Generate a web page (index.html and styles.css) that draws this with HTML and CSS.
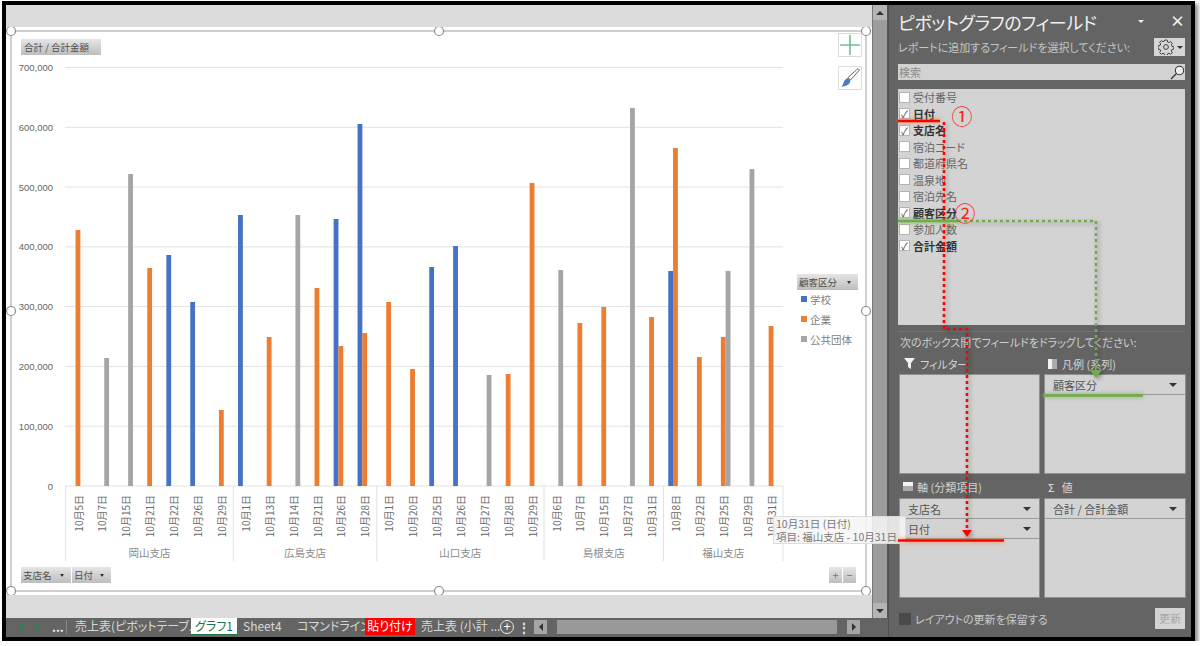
FILE: index.html
```html
<!DOCTYPE html>
<html lang="ja">
<head>
    <meta charset="UTF-8">
    <meta name="viewport" content="width=device-width, initial-scale=1.0">
    <title>ピボットグラフのフィールド</title>
    <link rel="stylesheet" href="styles.css">
</head>
<body>
<div class="frame">
    <div class="left">
        <div class="work">
            <div class="sheet-area">
                <div class="sheet">
                    <svg class="chart" width="866" height="568" viewBox="6 27 866 568">
                        <!-- gridlines -->
                        <g class="grid">
                            <line x1="65" y1="67.5" x2="783" y2="67.5"/>
                            <line x1="65" y1="127.3" x2="783" y2="127.3"/>
                            <line x1="65" y1="187.1" x2="783" y2="187.1"/>
                            <line x1="65" y1="246.9" x2="783" y2="246.9"/>
                            <line x1="65" y1="306.6" x2="783" y2="306.6"/>
                            <line x1="65" y1="366.4" x2="783" y2="366.4"/>
                            <line x1="65" y1="426.2" x2="783" y2="426.2"/>
                            <line x1="65" y1="486" x2="783" y2="486"/>
                            <line x1="65.7" y1="486" x2="65.7" y2="561"/>
                            <line x1="233.3" y1="486" x2="233.3" y2="561"/>
                            <line x1="376.7" y1="486" x2="376.7" y2="561"/>
                            <line x1="544" y1="486" x2="544" y2="561"/>
                            <line x1="663.5" y1="486" x2="663.5" y2="561"/>
                            <line x1="783" y1="486" x2="783" y2="561"/>
                        </g>
                        <g class="val">
                            <text x="53" y="67.5">700,000</text>
                            <text x="53" y="127.3">600,000</text>
                            <text x="53" y="187.1">500,000</text>
                            <text x="53" y="246.9">400,000</text>
                            <text x="53" y="306.6">300,000</text>
                            <text x="53" y="366.4">200,000</text>
                            <text x="53" y="426.2">100,000</text>
                            <text x="53" y="486">0</text>
                        </g>
                        <!-- bars -->
                        <g class="blue">
                            <rect x="166.35" y="255" width="4.8" height="231"/>
                            <rect x="190.25" y="302" width="4.8" height="184"/>
                            <rect x="238.05" y="215" width="4.8" height="271"/>
                            <rect x="333.65" y="219" width="4.8" height="267"/>
                            <rect x="357.55" y="124" width="4.8" height="362"/>
                            <rect x="429.25" y="267" width="4.8" height="219"/>
                            <rect x="453.15" y="246" width="4.8" height="240"/>
                            <rect x="668.25" y="271" width="4.8" height="215"/>
                        </g>
                        <g class="orange">
                            <rect x="75.55" y="230" width="4.8" height="256"/>
                            <rect x="147.25" y="268" width="4.8" height="218"/>
                            <rect x="218.95" y="410" width="4.8" height="76"/>
                            <rect x="266.75" y="337" width="4.8" height="149"/>
                            <rect x="314.55" y="288" width="4.8" height="198"/>
                            <rect x="338.45" y="346" width="4.8" height="140"/>
                            <rect x="362.35" y="333" width="4.8" height="153"/>
                            <rect x="386.25" y="302" width="4.8" height="184"/>
                            <rect x="410.15" y="369" width="4.8" height="117"/>
                            <rect x="505.75" y="374" width="4.8" height="112"/>
                            <rect x="529.65" y="183" width="4.8" height="303"/>
                            <rect x="577.45" y="323" width="4.8" height="163"/>
                            <rect x="601.35" y="307" width="4.8" height="179"/>
                            <rect x="649.15" y="317" width="4.8" height="169"/>
                            <rect x="673.05" y="148" width="4.8" height="338"/>
                            <rect x="696.95" y="357" width="4.8" height="129"/>
                            <rect x="720.85" y="337" width="4.8" height="149"/>
                            <rect x="768.65" y="326" width="4.8" height="160"/>
                        </g>
                        <g class="gray">
                            <rect x="104.25" y="358" width="4.8" height="128"/>
                            <rect x="128.15" y="174" width="4.8" height="312"/>
                            <rect x="295.45" y="215" width="4.8" height="271"/>
                            <rect x="486.65" y="375" width="4.8" height="111"/>
                            <rect x="558.35" y="270" width="4.8" height="216"/>
                            <rect x="630.05" y="108" width="4.8" height="378"/>
                            <rect x="725.65" y="271" width="4.8" height="215"/>
                            <rect x="749.55" y="169" width="4.8" height="317"/>
                        </g>
                        <!-- category labels -->
                        <g class="cat">
                            <text transform="translate(78,495) rotate(-90)">10月5日</text>
                            <text transform="translate(101.9,495) rotate(-90)">10月7日</text>
                            <text transform="translate(125.8,495) rotate(-90)">10月15日</text>
                            <text transform="translate(149.7,495) rotate(-90)">10月21日</text>
                            <text transform="translate(173.6,495) rotate(-90)">10月22日</text>
                            <text transform="translate(197.5,495) rotate(-90)">10月26日</text>
                            <text transform="translate(221.4,495) rotate(-90)">10月29日</text>
                            <text transform="translate(245.3,495) rotate(-90)">10月1日</text>
                            <text transform="translate(269.2,495) rotate(-90)">10月13日</text>
                            <text transform="translate(293.1,495) rotate(-90)">10月14日</text>
                            <text transform="translate(317,495) rotate(-90)">10月21日</text>
                            <text transform="translate(340.9,495) rotate(-90)">10月26日</text>
                            <text transform="translate(364.8,495) rotate(-90)">10月28日</text>
                            <text transform="translate(388.7,495) rotate(-90)">10月1日</text>
                            <text transform="translate(412.6,495) rotate(-90)">10月20日</text>
                            <text transform="translate(436.5,495) rotate(-90)">10月25日</text>
                            <text transform="translate(460.4,495) rotate(-90)">10月26日</text>
                            <text transform="translate(484.3,495) rotate(-90)">10月27日</text>
                            <text transform="translate(508.2,495) rotate(-90)">10月28日</text>
                            <text transform="translate(532.1,495) rotate(-90)">10月29日</text>
                            <text transform="translate(556,495) rotate(-90)">10月6日</text>
                            <text transform="translate(579.9,495) rotate(-90)">10月7日</text>
                            <text transform="translate(603.8,495) rotate(-90)">10月15日</text>
                            <text transform="translate(627.7,495) rotate(-90)">10月27日</text>
                            <text transform="translate(651.6,495) rotate(-90)">10月31日</text>
                            <text transform="translate(675.5,495) rotate(-90)">10月8日</text>
                            <text transform="translate(699.4,495) rotate(-90)">10月22日</text>
                            <text transform="translate(723.3,495) rotate(-90)">10月25日</text>
                            <text transform="translate(747.2,495) rotate(-90)">10月29日</text>
                            <text transform="translate(771.1,495) rotate(-90)">10月31日</text>
                        </g>
                        <g class="branch">
                            <text x="149.5" y="552">岡山支店</text>
                            <text x="305" y="552">広島支店</text>
                            <text x="460.3" y="552">山口支店</text>
                            <text x="603.7" y="552">島根支店</text>
                            <text x="723.2" y="552">福山支店</text>
                        </g>
                        <!-- legend -->
                        <rect class="blue" x="801" y="296" width="6" height="6"/>
                        <rect class="orange" x="801" y="316" width="6" height="6"/>
                        <rect class="gray" x="801" y="336" width="6" height="6"/>
                        <g class="legend">
                            <text x="810" y="299">学校</text>
                            <text x="810" y="319">企業</text>
                            <text x="810" y="339">公共団体</text>
                        </g>
                        <!-- selection frame -->
                        <rect class="sel" x="11" y="31" width="855" height="560"/>
                        <g class="handle">
                            <circle cx="11" cy="31" r="4.5"/>
                            <circle cx="439" cy="31" r="4.5"/>
                            <circle cx="866" cy="31" r="4.5"/>
                            <circle cx="11" cy="311" r="4.5"/>
                            <circle cx="866" cy="311" r="4.5"/>
                            <circle cx="11" cy="591" r="4.5"/>
                            <circle cx="439" cy="591" r="4.5"/>
                            <circle cx="866" cy="591" r="4.5"/>
                        </g>
                    </svg>

                    <div class="pill pill-value">合計 / 合計金額</div>
                    <div class="pill pill-legend">顧客区分<span class="tri-small"></span></div>
                    <div class="axis-pills">
                        <div class="pill pill-branch">支店名<span class="tri-small"></span></div>
                        <div class="pill pill-date">日付<span class="tri-small"></span></div>
                    </div>
                    <div class="zoom-btns">
                        <div class="pill zoom-btn">+</div>
                        <div class="pill zoom-btn">−</div>
                    </div>
                    <div class="side-btn side-add">
                        <svg width="22" height="22" viewBox="0 0 22 22"><path d="M11 1v20M1 11h20" stroke="#6fbf95" stroke-width="1.6" fill="none"/></svg>
                    </div>
                    <div class="side-btn side-style">
                        <svg width="22" height="22" viewBox="0 0 22 22">
                            <path d="M19 1.5l1.5 1.5-9 10-2.5-2.5z" fill="#fff" stroke="#666" stroke-width="1"/>
                            <path d="M9 11l2.5 2.5c-.5 3.5-3.5 6-9 6 1.5-1 1.500-3 2.500-5 .8-1.800 2.500-3 4-3.500z" fill="#4a7cc4"/>
                        </svg>
                    </div>
                </div>
            </div>
            <div class="vscroll">
                <div class="vscroll-btn"><span class="tri-up"></span></div>
                <div class="vscroll-track"></div>
                <div class="vscroll-btn"><span class="tri-down"></span></div>
            </div>
        </div>
        <div class="tabs">
            <span class="tab-arrow tab-arrow-l"></span>
            <span class="tab-arrow tab-arrow-r"></span>
            <span class="tab-more">...</span>
            <span class="tab tab-first">売上表(ピボットテーブル)</span>
            <span class="tab tab-active">グラフ1</span>
            <span class="tab tab-sheet4">Sheet4</span>
            <span class="tab tab-cmd">コマンドライン</span>
            <span class="tab tab-red">貼り付け</span>
            <span class="tab tab-last">売上表 (小計 ...</span>
            <span class="tab-add">+</span>
            <span class="tab-dots">⋮</span>
            <div class="hscroll">
                <div class="hscroll-btn"><span class="tri-left"></span></div>
                <div class="hscroll-thumb"></div>
                <div class="hscroll-btn"><span class="tri-right"></span></div>
            </div>
        </div>
    </div>

    <div class="panel">
        <div class="panel-title">
            <span class="panel-name">ピボットグラフのフィールド</span>
            <span class="tri-title"></span>
            <span class="panel-close">×</span>
        </div>
        <div class="panel-sub">
            <span>レポートに追加するフィールドを選択してください:</span>
            <div class="gear-btn">
                <svg width="16" height="16" viewBox="0 0 16 16">
                    <path d="M6.800 1h2.400l.4 2 1.400.6 1.700-1.100 1.700 1.700-1.100 1.700.6 1.400 2 .4v2.400l-2 .4-.6 1.400 1.100 1.700-1.700 1.700-1.700-1.100-1.400.6-.4 2H6.800l-.4-2-1.400-.6-1.700 1.100-1.700-1.700 1.100-1.700-.6-1.400-2-.4V6.800l2-.4.6-1.400-1.100-1.700 1.700-1.700 1.700 1.100 1.400-.6z" fill="none" stroke="#444" stroke-width="1"/>
                    <circle cx="8" cy="8" r="2.400" fill="none" stroke="#444" stroke-width="1"/>
                </svg>
                <span class="tri-dark"></span>
            </div>
        </div>
        <div class="search">
            <span>検索</span>
            <svg width="15" height="15" viewBox="0 0 15 15">
                <circle cx="9.500" cy="5.500" r="4.200" fill="#eee" stroke="#333" stroke-width="1.100"/>
                <path d="M6.500 8.500L1 14" stroke="#333" stroke-width="1.300"/>
            </svg>
        </div>
        <div class="field-list">
            <ul>
                <li><span class="check"></span>受付番号</li>
                <li class="on"><span class="check">✓</span>日付</li>
                <li class="on"><span class="check">✓</span>支店名</li>
                <li><span class="check"></span>宿泊コード</li>
                <li><span class="check"></span>都道府県名</li>
                <li><span class="check"></span>温泉地</li>
                <li><span class="check"></span>宿泊先名</li>
                <li class="on"><span class="check">✓</span>顧客区分</li>
                <li><span class="check"></span>参加人数</li>
                <li class="on"><span class="check">✓</span>合計金額</li>
            </ul>
        </div>
        <div class="divider"></div>
        <div class="hint">次のボックス間でフィールドをドラッグしてください:</div>
        <div class="areas">
            <div class="area-label">
                <svg width="13" height="11" viewBox="0 0 13 11"><path d="M1 0h11L8 5v6L5 9V5z" fill="#f2f2f2"/></svg>
                フィルター
            </div>
            <div class="area-label">
                <svg width="10" height="10" viewBox="0 0 10 10"><rect width="4" height="10" fill="#f2f2f2"/><rect x="4" width="5" height="10" fill="#aaa"/></svg>
                凡例 (系列)
            </div>
            <div class="area-box"></div>
            <div class="area-box">
                <div class="area-item">顧客区分<span class="tri-dark"></span></div>
            </div>
            <div class="area-label area-label-low">
                <svg width="10" height="10" viewBox="0 0 10 10"><rect width="10" height="4" fill="#f2f2f2"/><rect y="4" width="10" height="5" fill="#aaa"/></svg>
                軸 (分類項目)
            </div>
            <div class="area-label area-label-low"><span class="sigma">Σ</span>値</div>
            <div class="area-box">
                <div class="area-item">支店名<span class="tri-dark"></span></div>
                <div class="area-item">日付<span class="tri-dark"></span></div>
            </div>
            <div class="area-box">
                <div class="area-item">合計 / 合計金額<span class="tri-dark"></span></div>
            </div>
        </div>
        <div class="panel-foot">
            <span class="defer-box"></span>
            <span class="defer-text">レイアウトの更新を保留する</span>
            <span class="update-btn">更新</span>
        </div>
    </div>

    <div class="tooltip">10月31日 (日付)<br>項目: 福山支店 - 10月31日</div>

    <!-- hand drawn arrows on top of the screenshot -->
    <svg class="marks" width="1185" height="632" viewBox="6 5 1185 632">
        <g class="shadowed">
            <path class="dot-red" d="M944 122V329H967V530"/>
            <path class="arrow-red" d="M962 530h10l-5 7z"/>
            <path class="dot-green" d="M958 221H1096V370"/>
            <path class="arrow-green" d="M1090 370h12l-6 8z"/>
        </g>
        <line class="bar-red" x1="898" y1="121" x2="940" y2="121"/>
        <line class="bar-red" x1="898" y1="540.500" x2="1004" y2="540.500"/>
        <line class="bar-green" x1="898" y1="221" x2="958" y2="221"/>
        <line class="bar-green" x1="1043" y1="395.500" x2="1143" y2="395.500"/>
        <text class="num" x="962" y="115">①</text>
        <text class="num" x="965" y="212">②</text>
    </svg>
</div>
</body>
</html>
```

FILE: styles.css
```css
* {
    box-sizing: border-box;
}
body {
    margin: 0;
    background: #fff;
    font-family: "Noto Sans CJK JP", "Liberation Sans", sans-serif;
    overflow: hidden;
}
.frame {
    position: relative;
    display: flex;
    width: 1193px;
    height: 640px;
    margin: 1px 0 0 2px;
    border: 4px solid #000;
    background: #646464;
    box-shadow: 3px 3px 4px rgba(0, 0, 0, 0.45);
}

/* left side */
.left {
    width: 882px;
    display: flex;
    flex-direction: column;
}
.work {
    display: flex;
    height: 613px;
}
.sheet-area {
    width: 866px;
    padding-top: 22px;
    background: #dcdcdc;
}
.sheet {
    position: relative;
    height: 568px;
    background: #fff;
}
.chart {
    display: block;
}
.chart text {
    font-family: "Noto Sans CJK JP", "Liberation Sans", sans-serif;
    dominant-baseline: central;
}
.grid line {
    stroke: #e2e2e2;
    stroke-width: 1;
}
.val text {
    font-family: "Liberation Sans", sans-serif;
    font-size: 9.5px;
    fill: #666;
    text-anchor: end;
}
.blue {
    fill: #4472c4;
}
.orange {
    fill: #ed7d31;
}
.gray {
    fill: #a5a5a5;
}
.cat text {
    font-size: 10px;
    fill: #6a6a6a;
    text-anchor: end;
}
.branch text {
    font-size: 10.5px;
    fill: #8a8a8a;
    text-anchor: middle;
}
.legend text {
    font-size: 10.5px;
    fill: #808080;
}
.sel {
    fill: none;
    stroke: #b0b0b0;
    stroke-width: 1.2;
}
.handle circle {
    fill: #fff;
    stroke: #8c8c8c;
    stroke-width: 1.2;
}

/* grey field buttons on the chart */
.pill {
    display: flex;
    align-items: center;
    height: 16px;
    padding-left: 2px;
    font-size: 9.5px;
    color: #4d4d4d;
    background: linear-gradient(#e6e6e6, #bdbdbd);
}
.pill-value {
    position: absolute;
    left: 15px;
    top: 12px;
    width: 80px;
    padding-left: 3px;
}
.pill-legend {
    position: absolute;
    left: 791px;
    top: 247px;
    width: 61px;
}
.axis-pills {
    position: absolute;
    left: 15px;
    top: 540px;
    display: flex;
    gap: 1px;
}
.pill-branch {
    width: 50px;
}
.pill-date {
    width: 39px;
}
.tri-small {
    margin-left: auto;
    margin-right: 7px;
    border: 2px solid transparent;
    border-top: 3px solid #333;
    border-bottom: 0;
}
.zoom-btns {
    position: absolute;
    left: 823px;
    top: 540px;
    display: flex;
    gap: 1px;
}
.zoom-btn {
    width: 13px;
    padding: 0;
    justify-content: center;
    font-size: 11px;
    color: #777;
}
.side-btn {
    position: absolute;
    left: 832px;
    width: 24px;
    height: 24px;
    display: flex;
    align-items: center;
    justify-content: center;
    background: #fff;
    border: 1px solid #dcdcdc;
}
.side-add {
    top: 6px;
}
.side-style {
    top: 39px;
}

/* vertical scrollbar */
.vscroll {
    width: 16px;
    display: flex;
    flex-direction: column;
    border-left: 1px solid #777;
    border-right: 1px solid #555;
    background: #9c9c9c;
}
.vscroll-btn {
    height: 15px;
    display: flex;
    align-items: center;
    justify-content: center;
    background: #b4b4b4;
}
.vscroll-track {
    flex: 1;
}
.tri-up {
    border: 4px solid transparent;
    border-bottom: 4px solid #333;
    border-top: 0;
}
.tri-down {
    border: 4px solid transparent;
    border-top: 4px solid #333;
    border-bottom: 0;
}

/* sheet tabs */
.tabs {
    display: flex;
    align-items: center;
    height: 17px;
    font-size: 12px;
    color: #d8d8d8;
    font-feature-settings: "palt";
    white-space: nowrap;
}
.tab-arrow {
    width: 0;
    border: 3px solid transparent;
}
.tab-arrow-l {
    margin-left: 13px;
    border-right: 4px solid #1f8a4c;
    border-left: 0;
}
.tab-arrow-r {
    margin-left: 13px;
    border-left: 4px solid #1f8a4c;
    border-right: 0;
}
.tab-more {
    margin-left: 12px;
    width: 15px;
    font-weight: bold;
    color: #eee;
    border-right: 1px solid #8a8a8a;
    line-height: 14px;
}
.tab {
    display: block;
    height: 17px;
    line-height: 16px;
}
.tab-first {
    width: 124px;
    padding-left: 8px;
}
.tab-active {
    width: 46px;
    background: #fff;
    color: #217346;
    text-align: center;
    border-bottom: 1px solid #217346;
}
.tab-sheet4 {
    width: 52px;
    padding-left: 6px;
    border-right: 0;
}
.tab-cmd {
    width: 76px;
    padding-left: 8px;
}
.tab-red {
    width: 50px;
    background: #f00;
    color: #fff;
    text-align: center;
}
.tab-last {
    width: 84px;
    padding-left: 6px;
}
.tab-add {
    width: 14px;
    height: 14px;
    margin-left: 1px;
    border: 1.2px solid #eee;
    border-radius: 50%;
    color: #fff;
    font-size: 13px;
    line-height: 10px;
    text-align: center;
}
.tab-dots {
    width: 14px;
    margin-left: 3px;
    color: #eee;
    text-align: center;
    font-weight: bold;
}
.hscroll {
    display: flex;
    margin-left: 3px;
    width: 326px;
    height: 14px;
    margin-top: 1px;
}
.hscroll-btn {
    width: 13px;
    display: flex;
    align-items: center;
    justify-content: center;
    background: #a6a6a6;
}
.hscroll-thumb {
    width: 280px;
    margin: 0 auto;
    background: #999;
}
.tri-left {
    border: 4px solid transparent;
    border-right: 4px solid #333;
    border-left: 0;
}
.tri-right {
    border: 4px solid transparent;
    border-left: 4px solid #333;
    border-right: 0;
}

/* field panel */
.panel {
    width: 303px;
    padding: 0 6px 0 9px;
    border-left: 1px solid #4f4f4f;
    color: #d0d0d0;
    font-feature-settings: "palt";
}
.panel-title {
    position: relative;
    display: flex;
    align-items: center;
    height: 33px;
    color: #f0f0f0;
}
.panel-name {
    font-size: 18px;
    letter-spacing: -0.4px;
}
.tri-title {
    position: absolute;
    left: 240px;
    top: 15px;
    border: 3px solid transparent;
    border-top: 3px solid #eee;
    border-bottom: 0;
}
.panel-close {
    position: absolute;
    left: 272px;
    top: 5px;
    font-size: 15px;
    font-weight: bold;
}
.panel-sub {
    display: flex;
    align-items: center;
    justify-content: space-between;
    height: 18px;
    font-size: 11px;
    color: #c4c4c4;
}
.gear-btn {
    display: flex;
    align-items: center;
    gap: 3px;
    width: 31px;
    height: 18px;
    padding-left: 4px;
    background: #d6d6d6;
}
.tri-dark {
    margin-left: auto;
    border: 4px solid transparent;
    border-top: 4px solid #333;
    border-bottom: 0;
}
.gear-btn .tri-dark {
    margin-left: 0;
    border-width: 3px;
    border-top-width: 3px;
    border-bottom-width: 0;
}
.search {
    display: flex;
    align-items: center;
    justify-content: space-between;
    height: 16px;
    margin-top: 8px;
    background: #d2d2d2;
    font-size: 11px;
    color: #8a8a8a;
}
.search span {
    padding-left: 1px;
}
.field-list {
    height: 236px;
    margin-top: 11px;
    background: #d3d3d3;
    font-size: 11px;
    color: #666;
}
.field-list ul {
    margin: -2px 0 0;
    padding: 0;
    list-style: none;
}
.field-list li {
    display: flex;
    align-items: center;
    height: 16.5px;
    gap: 3px;
    padding-left: 1px;
}
.field-list li.on {
    font-weight: bold;
    color: #333;
}
.check {
    width: 11px;
    height: 11px;
    background: #fff;
    border: 1px solid #b5b5b5;
    color: #333;
    font-size: 10px;
    font-weight: normal;
    line-height: 9px;
    text-align: center;
}
.divider {
    height: 1px;
    margin-top: 6px;
    background: #757575;
}
.hint {
    height: 21px;
    padding: 1px 0 0 2px;
    font-size: 11px;
    line-height: 19px;
    color: #cfcfcf;
}
.areas {
    display: grid;
    grid-template-columns: 141px 142px;
    grid-template-rows: 21px 100px 24px 100px;
    column-gap: 4px;
    margin-left: 1px;
}
.area-label {
    display: flex;
    align-items: center;
    gap: 4px;
    padding-left: 4px;
    font-size: 11px;
    color: #d4d4d4;
}
.area-label-low {
    padding-top: 2px;
}
.sigma {
    margin-right: 3px;
    color: #e8e8e8;
}
.area-box {
    background: #d3d3d3;
    border: 1px solid #8f8f8f;
}
.area-item {
    display: flex;
    align-items: center;
    height: 20px;
    padding: 0 8px;
    border-bottom: 1px solid #9a9a9a;
    font-size: 11px;
    color: #555;
}
.panel-foot {
    display: flex;
    align-items: center;
    height: 21px;
    margin: 10px 0 0 1px;
}
.defer-box {
    width: 12px;
    height: 12px;
    background: #4a4a4a;
}
.defer-text {
    margin-left: 4px;
    font-size: 11px;
    color: #c8c8c8;
}
.update-btn {
    width: 30px;
    height: 21px;
    margin-left: auto;
    background: #d4d4d4;
    color: #a8a8a8;
    font-size: 11px;
    line-height: 20px;
    text-align: center;
}

/* things on top */
.tooltip {
    position: absolute;
    left: 767px;
    top: 511px;
    width: 133px;
    height: 28px;
    padding-left: 2px;
    background: rgba(246, 246, 246, 0.88);
    border: 1px solid #dcdcdc;
    font-size: 10.5px;
    line-height: 13px;
    color: #777;
    white-space: nowrap;
    overflow: hidden;
}
.marks {
    position: absolute;
    left: 0;
    top: 0;
    overflow: visible;
    pointer-events: none;
}
.shadowed {
    filter: drop-shadow(2px 2px 2px rgba(0, 0, 0, 0.35));
}
.dot-red {
    fill: none;
    stroke: #f00;
    stroke-width: 2.6;
    stroke-dasharray: 3 3;
}
.arrow-red {
    fill: #f00;
}
.dot-green {
    fill: none;
    stroke: #70ad47;
    stroke-width: 2.6;
    stroke-dasharray: 3 3;
}
.arrow-green {
    fill: #70ad47;
}
.bar-red {
    stroke: #f00;
    stroke-width: 2.4;
    filter: drop-shadow(0 0 2px #ed7d31);
}
.bar-green {
    stroke: #70ad47;
    stroke-width: 2.4;
    filter: drop-shadow(0 0 2px #70ad47);
}
.num {
    font-family: "Noto Sans CJK JP", sans-serif;
    font-size: 21px;
    fill: #f22;
    text-anchor: middle;
    dominant-baseline: central;
}
```
